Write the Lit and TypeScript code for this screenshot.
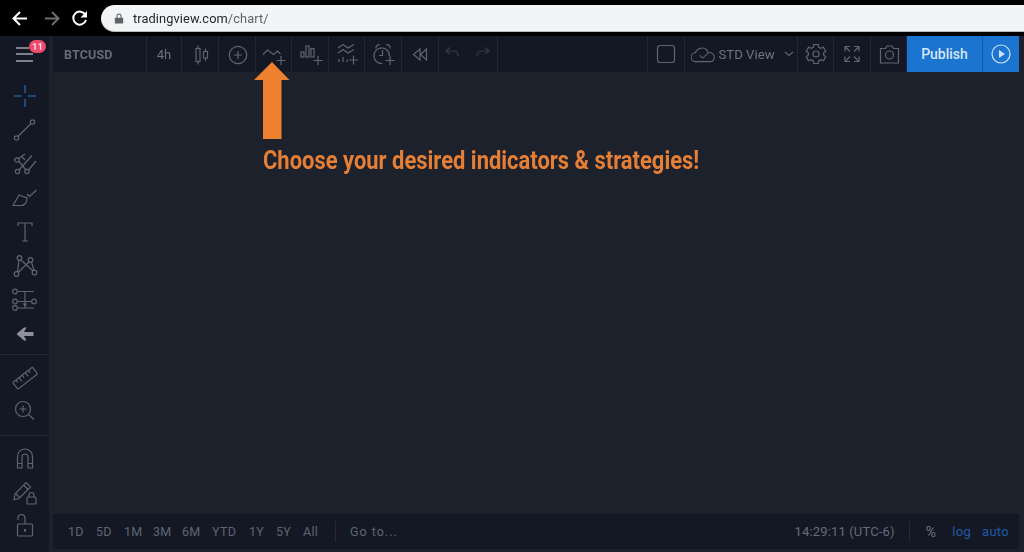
import { LitElement, html, css, svg, SVGTemplateResult } from "lit";
import { customElement } from "lit/decorators.js";

const ic = (content: SVGTemplateResult, cls = "") =>
  html`<svg class="ic ${cls}" viewBox="0 0 36 36" width="36" height="36">${content}</svg>`;

const plus = (x: number, y: number) => svg`<path d="M${x - 4.5} ${y}h9M${x} ${y - 4.5}v9"/>`;

const toolIcons = {
  candles: svg`<path d="M16 9.5v3M16 25.5v3M23.5 12.5v3M23.5 22v3"/><rect x="14" y="12.5" width="4" height="13"/><rect x="21.5" y="15.5" width="4" height="6.5"/>`,
  add: svg`<circle cx="19" cy="19" r="8.7"/><path d="M15 19h8M19 15v8"/>`,
  ind: svg`<path d="M7 18.5 11.500 14l6 4.500 4-3.500 3 3"/>${plus(25, 24.5)}`,
  bars: svg`<rect x="9" y="16" width="3" height="5"/><rect x="14" y="10" width="3" height="11"/><rect x="19" y="12.500" width="3" height="8.500"/>${plus(26, 24.5)}`,
  strat: svg`<path d="M9 12l5-3.500 5 3.500 6-3.500M9 17l5-3.500 5 3.500 6-3.500"/><path d="M10 26v-3M14 26v-5M18 26v-2.500"/>${plus(24.5, 24)}`,
  alarm: svg`<path d="M24.500 20a7.800 7.800 0 1 0-7 7.500"/><path d="M11 12.500c-.5-2.500 1.800-4.500 4-3.500M21 9c2.500-1 4.500 1 4 3.500M17.500 14v5.500h-3.500"/>${plus(25, 24.5)}`,
  rewind: svg`<path d="M18 13l-6.500 5.500 6.500 5.500zM24.500 13 18.500 18.500l6 5.500z"/>`,
  undo: svg`<path d="M13 11.500l-4 3.500 4 3M9.500 15h7c3 0 4.500 2 4.500 5"/>`,
  redo: svg`<path d="M22 11.500l4 3.500-4 3M25.500 15h-7c-3 0-4.500 2-4.500 5"/>`,
  square: svg`<rect x="9.500" y="9.500" width="17" height="17" rx="2.500"/>`,
  gear: svg`<circle cx="18" cy="18" r="3"/><path d="M15.800 8.500h4.400l.6 2.800 2 1 2.700-1 2.200 3.800-2.100 1.900v2l2.100 1.900-2.200 3.800-2.700-1-2 1-.6 2.800h-4.400l-.6-2.800-2-1-2.700 1-2.200-3.800 2.100-1.900v-2l-2.100-1.900 2.200-3.800 2.700 1 2-1z"/>`,
  full: svg`<path d="M11 15.500V10.500h5M11 10.500l5 5M25 15.500V10.500h-5M25 10.500l-5 5M11 20.500v5h5M11 25.500l5-5M25 20.500v5h-5M25 25.500l-5-5"/>`,
  camera: svg`<path d="M9.500 12.500h5l1.500-2.500h5l1.500 2.500h5v14.500h-18z"/><circle cx="18.500" cy="19" r="4"/>`,
};

const sideIcons = [
  { cls: "blue", s: svg`<path d="M7 18h8M21 18h8M18 7v8M18 21v8"/>` },
  { s: svg`<circle cx="9.500" cy="26" r="2.200"/><circle cx="25.500" cy="10" r="2.200"/><path d="M11 24.500 24 11.500"/>` },
  { s: svg`<circle cx="10" cy="14" r="2.200"/><circle cx="10.500" cy="25.500" r="2.200"/><circle cx="20" cy="25.500" r="2.200"/><path d="M11.500 12.500 18 8M12 15.500l7 8.500M12 24l13-14.500M21.500 24 29 15M15 11l3 3"/>` },
  { s: svg`<path d="M6 25.500 12 15l8 3c0 3.500-2 7.500-5.500 7.500z"/><path d="M20 14l2.500 2.500 7-6.500"/>` },
  { s: svg`<path d="M11 12v-3h14v3M18 9v18M15 27h6"/>` },
  { s: svg`<circle cx="12.500" cy="10" r="2.300"/><circle cx="23.500" cy="12" r="2.300"/><circle cx="9.500" cy="26" r="2.300"/><circle cx="27.500" cy="24.500" r="2.300"/><path d="M12 12 10.500 24M14 12l12 11M22 14 11 24.500M24.500 14 27 22.500"/>` },
  { s: svg`<circle cx="8" cy="9.500" r="2.300"/><circle cx="8" cy="19.500" r="2.300"/><circle cx="8" cy="26" r="2.300"/><circle cx="27" cy="19.500" r="2.300"/><path d="M11 9.500h16M11 19.500h13M11 26h16M18 9.500v16"/><path class="fill" d="M15.500 21.500h5L18 24.500z"/>` },
  { cls: "solid", s: svg`<path d="M9.500 18 17 11.500h2.500L17 16h9.500v4H17l2.500 4.500H17z"/>` },
];

const sideIcons2 = [
  { s: svg`<g transform="rotate(-38 18 18)"><rect x="5.500" y="14" width="25" height="8.500" rx="1"/><path d="M9.500 14v3M13.500 14v4.500M17.500 14v3M21.500 14v4.500M25.500 14v3"/></g>` },
  { s: svg`<circle cx="16" cy="16" r="7.500"/><path d="M12.500 16h7M16 12.500v7M21.500 21.500l5.500 5"/>` },
];

const sideIcons3 = [
  { s: svg`<path d="M10.500 28V16.500a7.500 7.500 0 0 1 15 0V28h-4.500V17a3 3 0 0 0-6 0V28zM10.500 23.500H15M21 23.500h4.500"/>` },
  { s: svg`<path d="M7 26.500l1-5.500L19 9.500l4.500 4.500L12 25.500zM16.500 12l4.500 4.500M9 21l3.500 3.500"/><rect x="20" y="24" width="9" height="7" rx="1"/><path d="M22 24v-2a2.500 2.500 0 0 1 5 0v2"/>` },
  { s: svg`<rect x="10.500" y="17" width="15" height="12" rx="1"/><path d="M18 17v-6a3.500 3.500 0 0 0-7 0v2"/><path class="thick" d="M18 22v2.500"/>` },
];

@customElement("app-root")
export class AppRoot extends LitElement {
  static styles = css`
    :host {
      display: block;
      width: 1024px;
      height: 552px;
      overflow: hidden;
      position: relative;
      background: #1d212c;
      font-family: Roboto, "Liberation Sans", sans-serif;
    }
    * { box-sizing: border-box; }
    .frame { filter: blur(0.35px); height: 552px; position: relative; }
    .browser {
      height: 36px;
      background: #000;
      display: flex;
      align-items: flex-start;
      padding-top: 5px;
    }
    .nav { width: 101px; height: 27px; display: flex; color: #fff; }
    .nav svg { fill: none; stroke: currentColor; stroke-width: 2; display: block; }
    .url {
      flex: 1;
      height: 27px;
      background: #f3f4f5;
      border-radius: 14px 0 0 14px;
      border-bottom: 1px solid #b9b9b9;
      display: flex;
      align-items: center;
      padding-left: 13px;
      gap: 9px;
      font-size: 12.8px;
      color: #24272b;
      letter-spacing: 0.1px;
    }
    .url span { color: #5f6368; }
    .toolbar {
      height: 36px;
      display: grid;
      grid-template-columns: 49px 4px 94px 35px 37px 37px 36px 37px 36px 37px 37px 59px 150px 37px 113px 36px 37px 36px 76px 36px 5px;
      color: #6e7380;
      background: #1d212c;
    }
    .cell {
      background: #141824;
      border-right: 1px solid #232733;
      display: flex;
      align-items: center;
      justify-content: center;
      position: relative;
      font-size: 13px;
    }
    .gap { background: #1d212c; }
    .none { background: transparent; }
    .ic { fill: none; stroke: #5f6471; stroke-width: 1.2; display: block; flex: none; }
    .ic .fill { fill: #5f6471; stroke: none; }
    .ic .thick { stroke-width: 2.2; }
    .ic.blue { stroke: #245a96; stroke-width: 1.5; }
    .ic.solid { fill: #8e8f9f; stroke: none; }
    .ic.faint { stroke: #363a47; }
    .menu { border-right: 0; }
    .bars { display: flex; flex-direction: column; gap: 4.5px; width: 17px; }
    .bars i { display: block; height: 2px; background: #7d818d; }
    .bars i:nth-child(1) { width: 13px; }
    .bars i:nth-child(3) { width: 17px; }
    .badge {
      position: absolute;
      left: 29px;
      top: 4px;
      width: 17px;
      height: 13px;
      border-radius: 7px;
      background: #ef4a6b;
      color: #f6dbe2;
      font-size: 9.5px;
      font-weight: 700;
      line-height: 13px;
      text-align: center;
    }
    .symbol { justify-content: flex-start; padding-left: 11px; font-weight: 700; font-size: 12.5px; letter-spacing: 0.15px; color: #666b78; }
    .view { justify-content: flex-start; padding-left: 6px; }
    .view .cloud { width: 26px; height: 18px; flex: none; }
    .view .cloud path { fill: none; stroke: #5f6471; stroke-width: 1.2; }
    .view .lbl { font-size: 13.2px; margin-left: 1.5px; color: #6e7380; }
    .view .chev { margin-left: 9.5px; width: 10px; height: 6px; fill: none; stroke: #5f6471; stroke-width: 1.2; }
    .publish { background: #1b75d0; color: #d6e6f6; font-size: 14px; font-weight: 500; border-right: 1px solid #155ba3; }
    .play { background: #1b75d0; border-right: 0; }
    .play svg { stroke: #cfe2f5; }
    .play .tri { fill: #cfe2f5; stroke: none; }
    .undo { justify-content: center; }
    .undo .ic { margin: 0 -5px; }
    .body { display: flex; height: 480px; }
    .side { width: 49px; background: #141824; display: flex; flex-direction: column; flex: none; }
    .group { display: flex; flex-direction: column; border-bottom: 1px solid #272b37; }
    .g1 { height: 283px; padding-top: 7px; }
    .g2 { height: 81px; padding-top: 6px; }
    .g3 { flex: 1; border: 0; padding-top: 5px; }
    .row { height: 34px; display: flex; align-items: center; justify-content: center; }
    .g2 .row, .g3 .row { height: 33.5px; }
    .main { flex: 1; display: flex; flex-direction: column; padding: 0 5px 3px 4px; }
    .chart { flex: 1; padding: 74px 0 0 210px; }
    .headline {
      font-family: Roboto, "Liberation Sans", sans-serif;
      font-weight: 700;
      font-size: 26px;
      line-height: 28px;
      color: #e57f36;
      white-space: nowrap;
      display: inline-block;
      transform: scaleX(0.844);
      transform-origin: left center;
    }
    .arrow { position: absolute; left: 254px; top: 62px; display: block; fill: #ee8130; }
    .bottom {
      height: 35px;
      background: #141824;
      display: flex;
      align-items: center;
      font-size: 12.5px;
      letter-spacing: 0.3px;
      color: #5f6471;
      padding-left: 15px;
    }
    .range { display: flex; }
    .range span { display: block; }
    .sep { width: 1px; height: 21px; background: #262a36; }
    .goto { font-size: 12.5px; letter-spacing: 1px; margin-left: 14px; }
    .spacer { flex: 1; }
    .time { font-size: 13px; letter-spacing: 0.15px; margin-right: 14px; color: #666b78; }
    .pct { font-size: 14px; margin: 0 16px 0 16px; color: #71757f; }
    .link { color: #1e5aa8; font-size: 13px; }
    .auto { margin: 0 10px 0 11px; }
  `;

  render() {
    const range: [string, number][] = [["1D", 28], ["5D", 28], ["1M", 29], ["3M", 29], ["6M", 30], ["YTD", 37], ["1Y", 27], ["5Y", 27], ["All", 32]];
    return html`
      <div class="frame">
      <div class="browser">
        <div class="nav">
          <svg viewBox="0 0 101 27" width="101" height="27">
            <path d="M27 13.500H14M20 7l-6.500 6.500L20 20"/>
            <path stroke="#6e6e6e" d="M45 13.500h13M52 7l6.500 6.500L52 20"/>
            <path d="M85.500 10a6.500 6.500 0 1 0 .5 5"/>
            <path fill="#fff" stroke="none" d="M87 6v6.500h-6.500z"/>
          </svg>
        </div>
        <div class="url">
          <svg viewBox="0 0 12 14" width="10" height="13"><path fill="#5f6368" d="M1 6h10v7H1zM3 6V4a3 3 0 0 1 6 0v2H7.800V4a1.800 1.800 0 0 0-3.600 0v2z"/></svg>
          <div>tradingview.com<span>/chart/</span></div>
        </div>
      </div>
      <div class="toolbar">
        <div class="cell menu"><div class="bars"><i></i><i></i><i></i></div><div class="badge">11</div></div>
        <div class="gap"></div>
        <div class="cell symbol">BTCUSD</div>
        <div class="cell">4h</div>
        <div class="cell">${ic(toolIcons.candles)}</div>
        <div class="cell">${ic(toolIcons.add)}</div>
        <div class="cell">${ic(toolIcons.ind)}</div>
        <div class="cell">${ic(toolIcons.bars)}</div>
        <div class="cell">${ic(toolIcons.strat)}</div>
        <div class="cell">${ic(toolIcons.alarm)}</div>
        <div class="cell">${ic(toolIcons.rewind)}</div>
        <div class="cell undo">${ic(toolIcons.undo, "faint")}${ic(toolIcons.redo, "faint")}</div>
        <div class="cell"></div>
        <div class="cell">${ic(toolIcons.square)}</div>
        <div class="cell view">
          <svg class="cloud" viewBox="3 0 28 20"><path d="M11 18.500H8a5 5 0 0 1-.5-10c1-4 8-7 12-3.500 1.500 1.500 2 2.500 2 3.500 4-1 7 2 7 5s-2 5-5 5zM12 11.500l3.500 3 6-5.500"/></svg>
          <span class="lbl">STD View</span>
          <svg class="chev" viewBox="0 0 10 6"><path d="M1 1l4 3.500L9 1"/></svg>
        </div>
        <div class="cell">${ic(toolIcons.gear)}</div>
        <div class="cell">${ic(toolIcons.full)}</div>
        <div class="cell">${ic(toolIcons.camera)}</div>
        <div class="cell publish">Publish</div>
        <div class="cell play">
          <svg class="ic" viewBox="0 0 36 36" width="36" height="36"><circle cx="18" cy="18" r="9"/><path class="tri" d="M16 14l6 4-6 4z"/></svg>
        </div>
        <div class="none"></div>
      </div>
      <div class="body">
        <div class="side">
          <div class="group g1">${sideIcons.map((i) => html`<div class="row">${ic(i.s, i.cls ?? "")}</div>`)}</div>
          <div class="group g2">${sideIcons2.map((i) => html`<div class="row">${ic(i.s)}</div>`)}</div>
          <div class="group g3">${sideIcons3.map((i) => html`<div class="row">${ic(i.s)}</div>`)}</div>
        </div>
        <div class="main">
          <div class="chart"><div class="headline">Choose your desired indicators &amp; strategies!</div></div>
          <div class="bottom">
            <div class="range">${range.map(([t, w]) => html`<span style="width:${w}px">${t}</span>`)}</div>
            <div class="sep"></div>
            <div class="goto">Go to...</div>
            <div class="spacer"></div>
            <div class="time">14:29:11 (UTC-6)</div>
            <div class="sep"></div>
            <div class="pct">%</div>
            <div class="link">log</div>
            <div class="link auto">auto</div>
          </div>
        </div>
      </div>
      <svg class="arrow" width="36" height="78" viewBox="0 0 36 78"><path d="M18 0 35.500 18H27.500V77H9V18H0z"/></svg>
      </div>
    `;
  }
}
